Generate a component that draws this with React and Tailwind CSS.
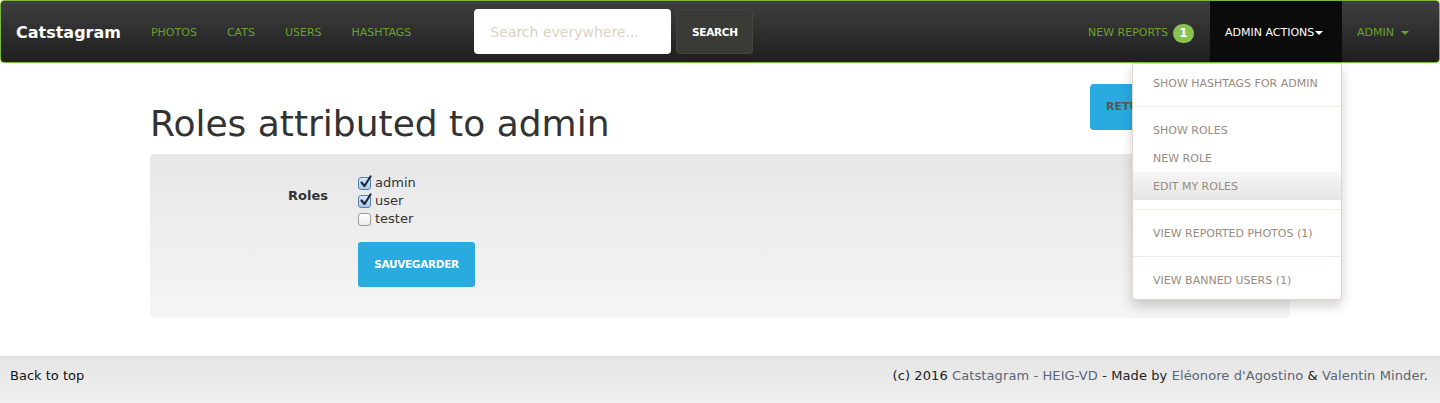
import React from "react";

const F = { fontFamily: '"DejaVu Sans", Verdana, sans-serif' };

function Caret({ className }) {
  return (
    <svg width="8" height="4" viewBox="0 0 8 4" className={className}>
      <path d="M0 0 L8 0 L4 4 Z" fill="currentColor" />
    </svg>
  );
}

function Check({ checked, label }) {
  return (
    <div className="flex items-center h-[18px]">
      <span
        className={
          "relative w-[13px] h-[13px] rounded-[3px] border " +
          (checked
            ? "border-[#5b7fa8] bg-gradient-to-b from-[#d9e9f8] to-[#a9c9ea]"
            : "border-[#9a9a9a] bg-gradient-to-b from-white to-[#ececec]")
        }
      >
        {checked && (
          <svg width="14" height="14" viewBox="0 0 14 14" className="absolute left-[0px] top-[-3px]">
            <path d="M2.5 7.5 L5.5 11 L11.5 1.5" fill="none" stroke="#1c2a44" strokeWidth="2.2" strokeLinecap="round" strokeLinejoin="round" />
          </svg>
        )}
      </span>
      <span className="ml-[4px] text-[13px] text-[#333]">{label}</span>
    </div>
  );
}

export default function App() {
  return (
    <div style={F} className="w-[1440px] h-[403px] bg-white relative overflow-hidden text-[#333]">
      {/* Navbar */}
      <nav className="relative h-[63px] border border-[#7cb83a] rounded-[4px] bg-gradient-to-b from-[#3f3f3f] to-[#1f1f1f] flex items-stretch">
        <div className="pl-[15px] pr-[15px] pt-[2px] flex items-center text-white text-[16px] font-bold">Catstagram</div>
        <ul className="flex items-stretch text-[11px] text-[#6ba22e]">
          <li className="px-[15px] pt-[3px] flex items-center">PHOTOS</li>
          <li className="px-[15px] pt-[3px] flex items-center">CATS</li>
          <li className="px-[15px] pt-[3px] flex items-center">USERS</li>
          <li className="px-[15px] pt-[3px] flex items-center">HASHTAGS</li>
        </ul>
        <div className="ml-[48px] flex items-center gap-[5px]">
          <div className="w-[197px] h-[45px] bg-white rounded-[4px] flex items-center pl-[16px] pt-[2px] text-[14px] text-[#ddd2c3]">
            Search everywhere...
          </div>
          <div className="w-[77px] h-[45px] rounded-[4px] bg-[#3a3a36] border border-[#454540] flex items-center justify-center pt-[2px] text-white text-[10.5px] font-bold tracking-[-0.3px]">
            SEARCH
          </div>
        </div>
        <div className="ml-auto flex items-stretch text-[11px]">
          <div className="flex items-center pl-[15px] pr-[16px] pt-[3px] text-[#6ba22e]">
            NEW REPORTS
            <span className="ml-[5px] w-[21px] h-[19px] rounded-full bg-[#8bc151] text-white font-bold text-[12px] flex items-center justify-center">1</span>
          </div>
          <div className="relative w-[132px] bg-[#0b0b0b] flex items-center pl-[15px] pt-[3px] text-white">
            ADMIN ACTIONS
            <Caret className="ml-[1px] text-white" />
            {/* Dropdown */}
            <div className="absolute right-0 top-[62px] w-[210px] bg-white border border-[#dcd6cc] rounded-b-[4px] shadow-[0_6px_12px_rgba(0,0,0,0.18)] py-[5px] z-10 text-[11px] text-[#978c7f]">
              <div className="h-[28px] flex items-center px-[20px] pt-[2px]">SHOW HASHTAGS FOR ADMIN</div>
              <div className="my-[9px] h-px bg-[#f1ece5]" />
              <div className="h-[28px] flex items-center px-[20px] pt-[2px]">SHOW ROLES</div>
              <div className="h-[28px] flex items-center px-[20px] pt-[2px]">NEW ROLE</div>
              <div className="h-[28px] flex items-center px-[20px] pt-[2px] bg-gradient-to-b from-[#f6f6f6] to-[#e6e6e6]">EDIT MY ROLES</div>
              <div className="my-[9px] h-px bg-[#f1ece5]" />
              <div className="h-[28px] flex items-center px-[20px] pt-[2px]">VIEW REPORTED PHOTOS (1)</div>
              <div className="my-[9px] h-px bg-[#f1ece5]" />
              <div className="h-[28px] flex items-center px-[20px] pt-[2px]">VIEW BANNED USERS (1)</div>
            </div>
          </div>
          <div className="flex items-center pl-[15px] pr-[30px] pt-[3px] text-[#6ba22e]">
            ADMIN
            <Caret className="ml-[7px]" />
          </div>
        </div>
      </nav>

      {/* Main */}
      <main className="w-[1140px] mx-auto">
        <div className="flex justify-between items-start pt-[21px]">
          <h1 className="mt-[20px] mb-[10px] text-[36px] leading-[40px] text-[#333] font-normal">Roles attributed to admin</h1>
          <div className="w-[200px] h-[46px] rounded-[4px] bg-[#29abe0] flex items-center pl-[16px] text-[11px] font-bold text-[#555]">
            RETURN TO ROLES
          </div>
        </div>
        <div className="rounded-[4px] bg-gradient-to-b from-[#e7e7e7] to-[#f5f5f5] pt-[20px] pb-[31px] flex">
          <div className="w-[178px] text-right font-bold text-[13px] pt-[12px]">Roles</div>
          <div className="ml-[30px]">
            <Check checked label="admin" />
            <Check checked label="user" />
            <Check label="tester" />
            <div className="mt-[14px] w-[117px] h-[45px] rounded-[3px] bg-[#29abe0] flex items-center justify-center text-white text-[10.5px] font-bold tracking-[-0.3px]">
              SAUVEGARDER
            </div>
          </div>
        </div>
      </main>

      {/* Footer */}
      <footer className="mt-[38px] h-[60px] border-t border-[#e2ddd6] bg-gradient-to-b from-[#e5e5e5] to-[#f3f3f3] flex justify-between items-start pt-[10px] pl-[10px] pr-[12px] text-[13px] leading-[18px]">
        <span className="text-[#111]">Back to top</span>
        <span className="text-[#222] tracking-[0.1px]">
          (c) 2016 <span className="text-[#5b6574]">Catstagram - HEIG-VD</span> - Made by{" "}
          <span className="text-[#5b6574]">Eléonore d'Agostino</span> &amp;{" "}
          <span className="text-[#5b6574]">Valentin Minder</span>.
        </span>
      </footer>
    </div>
  );
}
